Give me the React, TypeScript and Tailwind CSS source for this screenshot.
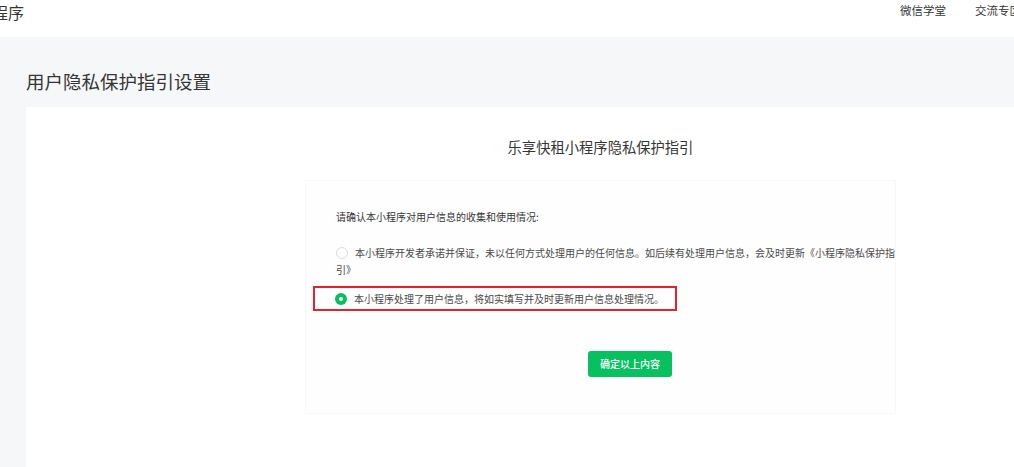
import React from "react";

const navItems = ["微信学堂", "交流专区"];

export default function App() {
  return (
    <div className="h-[467px] w-full overflow-hidden bg-[#f6f7f9] font-['Noto_Sans_CJK_SC',sans-serif] text-[#353535]">
      {/* top bar */}
      <header className="flex h-[37px] justify-between bg-white">
        <div className="-ml-[24px] whitespace-nowrap pt-[1px] text-[16px] leading-[22px]">
          小程序
        </div>
        <nav className="-mr-[7px] flex gap-[29px] whitespace-nowrap pt-[2px] text-[11.5px] leading-[16px]">
          {navItems.map((item) => (
            <a key={item} className="cursor-pointer">
              {item}
            </a>
          ))}
        </nav>
      </header>

      <main className="pl-[26px] pt-[34px]">
        <h1 className="whitespace-nowrap text-[18.5px] font-normal leading-[20px]">
          用户隐私保护指引设置
        </h1>

        <section className="mt-[16px] w-[1200px] bg-white pb-[60px] pt-[30px]">
          <div className="ml-[279px] w-[591px]">
            <h2 className="text-center text-[14.3px] font-normal leading-[20px]">
              乐享快租小程序隐私保护指引
            </h2>

            {/* settings card */}
            <div className="mt-[23px] border border-[#f8f8f8] bg-[#fefefe] pb-[36px] pl-[30px] pr-[0px] pt-[27px]">
              <p className="text-[10px] leading-[18px] text-[#353535]">
                请确认本小程序对用户信息的收集和使用情况:
              </p>

              <p className="-mr-[4px] mt-[18px] text-[10px] leading-[17px] text-[#4a4a4a]">
                <span className="mr-[7px] inline-block h-[12px] w-[12px] rounded-full border border-[#dcdcdc] bg-white align-[-2px]" />
                本小程序开发者承诺并保证，未以任何方式处理用户的任何信息。如后续有处理用户信息，会及时更新《小程序隐私保护指引》
              </p>

              <div className="-ml-[23px] mt-[8px] flex h-[25px] w-[364px] items-center gap-[7px] border-2 border-[#e3232e] pl-[20px] text-[10px] leading-[17px] text-[#4a4a4a]">
                <span className="flex h-[12px] w-[12px] items-center justify-center rounded-full bg-[#07c160]">
                  <span className="h-[4px] w-[4px] rounded-full bg-white" />
                </span>
                <span className="whitespace-nowrap">
                  本小程序处理了用户信息，将如实填写并及时更新用户信息处理情况。
                </span>
              </div>

              <div className="mt-[38px] pl-[252px]">
                <button className="h-[26px] w-[84px] rounded-[3px] bg-[#07c160] text-[10px] font-medium text-white">
                  确定以上内容
                </button>
              </div>
            </div>
          </div>
        </section>
      </main>
    </div>
  );
}
